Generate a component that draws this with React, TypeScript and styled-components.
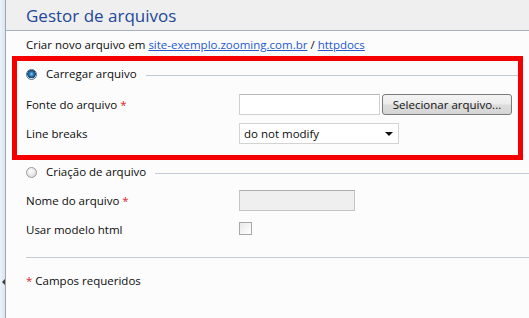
import React from "react";
import styled, { createGlobalStyle } from "styled-components";

const GlobalStyle = createGlobalStyle`
  html, body {
    margin: 0;
    padding: 0;
    background: #fcfcfc;
  }
  body {
    font-family: "Open Sans", "Noto Sans", sans-serif;
    font-size: 11.5px;
    color: #0c0c0c;
  }
`;

const Page = styled.div`
  display: flex;
  width: 529px;
  height: 318px;
  overflow: hidden;
`;

const SideStrip = styled.div`
  width: 6px;
  flex-shrink: 0;
  background: linear-gradient(to right, #eef3f9, #d9e4f0);
  border-right: 1px solid #9ea7b3;
  padding-top: 279px;
  box-sizing: border-box;
`;

const CollapseArrow = styled.div`
  width: 0;
  height: 0;
  margin-left: 2px;
  border-top: 3px solid transparent;
  border-bottom: 3px solid transparent;
  border-right: 3px solid #3c3c3c;
`;

const Main = styled.div`
  flex: 1;
  display: flex;
  flex-direction: column;
  min-width: 0;
`;

const Header = styled.div`
  height: 31px;
  box-sizing: border-box;
  background: #efefef;
  border-bottom: 1px solid #a7b1c2;
  padding-left: 20px;
  display: flex;
  align-items: center;
`;

const Title = styled.h1`
  margin: 0;
  font-size: 17px;
  font-weight: 400;
  color: #22489a;
`;

const Body = styled.div`
  padding: 6px 0 0 20px;
  display: flex;
  flex-direction: column;
`;

const Breadcrumb = styled.div`
  line-height: 16px;
  height: 16px;
`;

const Link = styled.a`
  color: #2459cf;
  text-decoration: underline;
`;

const Section = styled.div<{ $highlight?: boolean }>`
  display: flex;
  flex-direction: column;
  margin-left: -9px;
  padding-left: 9px;
  margin-right: ${(p) => (p.$highlight ? "11px" : "0")};
  margin-top: ${(p) => (p.$highlight ? "8px" : "6px")};
  padding-top: ${(p) => (p.$highlight ? "5px" : "3px")};
  padding-bottom: ${(p) => (p.$highlight ? "11px" : "0")};
  outline: ${(p) => (p.$highlight ? "5px solid #f40000" : "none")};
`;

const LegendRow = styled.div`
  display: flex;
  align-items: center;
  height: 16px;
  gap: 9px;
`;

const LegendLine = styled.div`
  flex: 1;
  height: 1px;
  background: #c3c9d4;
  margin-top: 2px;
`;

const Radio = styled.span<{ $checked?: boolean }>`
  width: 11px;
  height: 11px;
  border-radius: 50%;
  box-sizing: border-box;
  border: 1px solid ${(p) => (p.$checked ? "#56708c" : "#9a9a9a")};
  background: ${(p) =>
    p.$checked
      ? "radial-gradient(circle at 50% 45%, #8fd0f5 0, #2a7fbf 2px, #1d3e62 4px, #e8eef4 4.5px, #dfe5ec 100%)"
      : "radial-gradient(circle at 40% 35%, #ffffff 0, #e4e4e4 60%, #cfcfcf 100%)"};
  flex-shrink: 0;
`;

const LegendText = styled.span`
  line-height: 16px;
`;

const FieldRow = styled.div<{ $gap: number }>`
  display: grid;
  grid-template-columns: 213px auto;
  align-items: center;
  height: 21px;
  margin-top: ${(p) => p.$gap}px;
`;

const Label = styled.span`
  line-height: 16px;
`;

const Required = styled.span`
  color: #e0262a;
  margin-left: 3px;
`;

const Controls = styled.div`
  display: flex;
  align-items: center;
  gap: 2px;
`;

const TextInput = styled.div<{ $width: number; $disabled?: boolean }>`
  width: ${(p) => p.$width}px;
  height: 21px;
  box-sizing: border-box;
  border: 1px solid ${(p) => (p.$disabled ? "#c4c4c4" : "#d0d0d0")};
  border-top-color: ${(p) => (p.$disabled ? "#acacac" : "#b8b8b8")};
  background: ${(p) => (p.$disabled ? "#efefef" : "#ffffff")};
`;

const Button = styled.button`
  height: 21px;
  width: 130px;
  box-sizing: border-box;
  border: 1px solid #7a7a7a;
  border-radius: 3px;
  background: linear-gradient(to bottom, #f4f4f4 0%, #ebebeb 48%, #dcdcdc 52%, #d6d6d6 100%);
  font-family: inherit;
  font-size: 11.5px;
  color: #111;
  padding: 0;
`;

const Select = styled.div`
  width: 160px;
  height: 21px;
  box-sizing: border-box;
  border: 1px solid #d3d3d3;
  background: #fff;
  display: flex;
  align-items: center;
  justify-content: space-between;
  padding: 0 5px 0 4px;
`;

const Caret = styled.span`
  width: 0;
  height: 0;
  border-left: 4px solid transparent;
  border-right: 4px solid transparent;
  border-top: 4px solid #111;
`;

const Checkbox = styled.span`
  width: 13px;
  height: 13px;
  box-sizing: border-box;
  border: 1px solid #a8a8a8;
  background: linear-gradient(135deg, #e9e9e9, #ffffff);
  margin-top: -3px;
`;

const Divider = styled.div`
  height: 1px;
  background: #c6ccd6;
  margin-top: 17px;
`;

const Footer = styled.div`
  margin-top: 15px;
  line-height: 16px;
`;

const FooterStar = styled.span`
  color: #e0262a;
  margin-right: 3px;
`;

export default function App() {
  return (
    <>
      <GlobalStyle />
      <Page>
        <SideStrip>
          <CollapseArrow />
        </SideStrip>
        <Main>
          <Header>
            <Title>Gestor de arquivos</Title>
          </Header>
          <Body>
            <Breadcrumb>
              Criar novo arquivo em <Link>site-exemplo.zooming.com.br</Link> /{" "}
              <Link>httpdocs</Link>
            </Breadcrumb>

            <Section $highlight>
              <LegendRow>
                <Radio $checked />
                <LegendText>Carregar arquivo</LegendText>
                <LegendLine />
              </LegendRow>
              <FieldRow $gap={12}>
                <Label>
                  Fonte do arquivo<Required>*</Required>
                </Label>
                <Controls>
                  <TextInput $width={141} />
                  <Button>Selecionar arquivo...</Button>
                </Controls>
              </FieldRow>
              <FieldRow $gap={8}>
                <Label>Line breaks</Label>
                <Controls>
                  <Select>
                    <span>do not modify</span>
                    <Caret />
                  </Select>
                </Controls>
              </FieldRow>
            </Section>

            <Section>
              <LegendRow>
                <Radio />
                <LegendText>Criação de arquivo</LegendText>
                <LegendLine />
              </LegendRow>
              <FieldRow $gap={10}>
                <Label>
                  Nome do arquivo<Required>*</Required>
                </Label>
                <Controls>
                  <TextInput $width={116} $disabled />
                </Controls>
              </FieldRow>
              <FieldRow $gap={8}>
                <Label>Usar modelo html</Label>
                <Controls>
                  <Checkbox />
                </Controls>
              </FieldRow>
            </Section>

            <Divider />
            <Footer>
              <FooterStar>*</FooterStar>Campos requeridos
            </Footer>
          </Body>
        </Main>
      </Page>
    </>
  );
}
